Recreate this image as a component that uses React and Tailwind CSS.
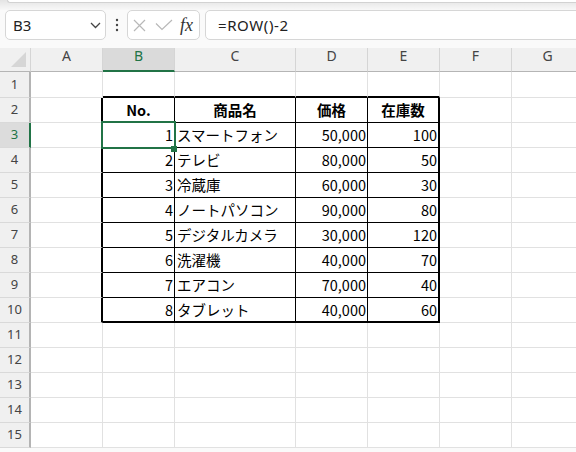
import React from "react";

const COLS = ["A", "B", "C", "D", "E", "F", "G"];
const COLW = ["w-[72px]", "w-[72px]", "w-[121px]", "w-[72px]", "w-[72px]", "w-[72px]", "w-[72px]"];

const DATA = [
  ["No.", "商品名", "価格", "在庫数"],
  ["1", "スマートフォン", "50,000", "100"],
  ["2", "テレビ", "80,000", "50"],
  ["3", "冷蔵庫", "60,000", "30"],
  ["4", "ノートパソコン", "90,000", "80"],
  ["5", "デジタルカメラ", "30,000", "120"],
  ["6", "洗濯機", "40,000", "70"],
  ["7", "エアコン", "70,000", "40"],
  ["8", "タブレット", "40,000", "60"],
];

function rightBorder(r, c) {
  const inTable = r >= 2 && r <= 10;
  if (inTable && (c === 0 || c === 4)) return "border-r-2 border-r-black";
  if (inTable && c >= 1 && c <= 3) return "border-r border-r-black";
  return "border-r border-r-[#e1e1e1]";
}

function bottomBorder(r, c) {
  const inCols = c >= 1 && c <= 4;
  if (inCols && (r === 1 || r === 10)) return "border-b-2 border-b-black";
  if (inCols && r >= 2 && r <= 9) return "border-b border-b-black";
  return "border-b border-b-[#e1e1e1]";
}

function Cell({ r, c }) {
  const cls = `${COLW[c]} shrink-0 h-full flex items-center ${rightBorder(r, c)} ${bottomBorder(r, c)}`;
  let content = null;
  if (r >= 2 && r <= 10 && c >= 1 && c <= 4) {
    const v = DATA[r - 2][c - 1];
    if (r === 2) {
      content = <span className="w-full text-center font-bold">{v}</span>;
    } else if (c === 2) {
      content = <span className="w-full text-left pl-[2px] whitespace-nowrap">{v}</span>;
    } else {
      content = <span className="w-full text-right pr-[1px]">{v}</span>;
    }
  }
  return <div className={cls}>{content}</div>;
}

function Row({ r }) {
  const h = r === 1 ? "h-[26px]" : "h-[25px]";
  const sel = r === 3;
  return (
    <div className={`flex ${h}`}>
      <div
        className={`w-[31px] shrink-0 h-full flex items-center justify-center text-[13px] border-b border-b-[#d9d9d9] border-r-2 ${
          sel ? "bg-[#dcdcdc] border-r-[#217346] text-[#217346]" : "bg-[#f0f0f0] border-r-[#b4b4b4] text-[#444]"
        }`}
        style={{ fontFamily: '"Noto Sans", sans-serif' }}
      >
        {r}
      </div>
      {COLS.map((_, c) => (
        <Cell key={c} r={r} c={c} />
      ))}
    </div>
  );
}

export default function App() {
  const rows = Array.from({ length: 15 }, (_, i) => i + 1);
  return (
    <div
      className="w-[576px] h-[452px] overflow-hidden bg-[#fafafa] text-black"
      style={{ fontFamily: '"Noto Sans", sans-serif' }}
    >
      {/* top strip */}
      <div className="h-[10px] bg-gradient-to-b from-[#e4e4e4] to-[#f8f8f8]">
        <div className="ml-[7px] h-[3px] bg-white border-b border-l border-[#d2d2d2] rounded-bl-[4px]" />
      </div>

      {/* formula bar */}
      <div className="flex h-[30px] pl-[5px]">
        <div className="w-[101px] shrink-0 bg-white border border-[#d6d6d6] rounded-[5px] flex items-center justify-between pl-[7px] pr-[4px]">
          <span className="text-[15px] text-[#222]">B3</span>
          <svg width="11" height="7" viewBox="0 0 11 7">
            <path d="M1 1L5.5 5.5L10 1" stroke="#444" strokeWidth="1.3" fill="none" />
          </svg>
        </div>
        <div className="w-[21px] shrink-0 flex items-center justify-center">
          <svg width="4" height="14" viewBox="0 0 4 14">
            <circle cx="2" cy="2" r="1.2" fill="#444" />
            <circle cx="2" cy="7" r="1.2" fill="#444" />
            <circle cx="2" cy="12" r="1.2" fill="#444" />
          </svg>
        </div>
        <div className="w-[73px] shrink-0 bg-white border border-[#d6d6d6] rounded-[5px] flex items-center pl-[5px]">
          <svg width="13" height="13" viewBox="0 0 13 13">
            <path d="M1 1L12 12M12 1L1 12" stroke="#b8b8b8" strokeWidth="1.2" />
          </svg>
          <svg className="ml-[9px]" width="18" height="12" viewBox="0 0 18 12">
            <path d="M1 4.5L7 10.5L17 1" stroke="#b8b8b8" strokeWidth="1.2" fill="none" />
          </svg>
          <span
            className="ml-[7px] italic text-[18px] text-[#333] leading-none"
            style={{ fontFamily: '"Liberation Serif", serif' }}
          >
            fx
          </span>
        </div>
        <div className="ml-[5px] flex-1 -mr-[10px] bg-white border border-[#d6d6d6] rounded-l-[5px] flex items-center pl-[12px]">
          <span className="text-[15px] text-[#222] tracking-[0.6px]">=ROW()-2</span>
        </div>
      </div>

      <div className="h-[8px]" />

      {/* grid */}
      <div className="relative bg-white">
        {/* column headers */}
        <div className="flex h-[24px]" style={{ fontFamily: '"Noto Sans", sans-serif' }}>
          <div className="w-[31px] shrink-0 h-full bg-[#f0f0f0] border-b border-b-[#b5b5b5] border-r border-r-[#d5d5d5] flex items-end justify-end pr-[3px] pb-[3px]">
            <svg width="16" height="16" viewBox="0 0 16 16">
              <polygon points="15,0 15,15 0,15" fill="#d6d6d6" />
            </svg>
          </div>
          {COLS.map((l, c) => (
            <div
              key={l}
              className={`${COLW[c]} shrink-0 h-full flex justify-center leading-[16px] text-[14px] border-r border-r-[#d5d5d5] ${
                c === 1
                  ? "bg-[#dadada] border-b-2 border-b-[#217346] text-[#217346]"
                  : "bg-[#f0f0f0] border-b border-b-[#b5b5b5] text-[#444]"
              }`}
            >
              {l}
            </div>
          ))}
        </div>

        <div className="text-[14.5px]" style={{ fontFamily: '"Noto Sans CJK JP", "Noto Sans", sans-serif' }}>
          {rows.map((r) => (
            <Row key={r} r={r} />
          ))}
        </div>

        {/* selection */}
        <div className="absolute left-[101px] top-[73px] w-[75px] h-[28px] border-2 border-[#217346] pointer-events-none" />
        <div className="absolute left-[171px] top-[98px] w-[6px] h-[6px] bg-[#217346] pointer-events-none" />
      </div>
    </div>
  );
}
